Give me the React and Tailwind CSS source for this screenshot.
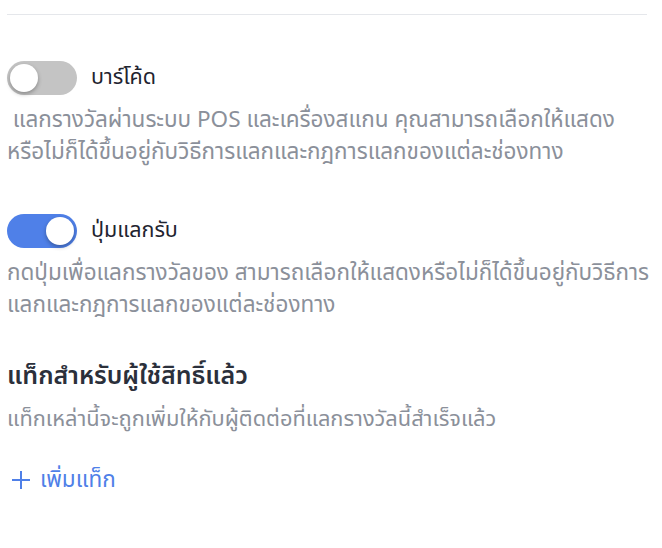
import { useState } from 'react';

const font = { fontFamily: '"Noto Sans Thai", "Noto Sans", "Liberation Sans", sans-serif' };

const Toggle = ({ on, onChange }) => (
  <button
    type="button"
    onClick={() => onChange(!on)}
    className={`relative h-[34px] w-[70px] shrink-0 rounded-full transition-colors ${on ? 'bg-[#4f80e8]' : 'bg-[#c4c4c4]'}`}
  >
    <span
      className={`absolute top-[3px] h-[28px] w-[28px] rounded-full bg-white shadow-[0_2px_4px_rgba(0,0,0,0.3)] transition-all ${on ? 'left-[39px]' : 'left-[3px]'}`}
    />
  </button>
);

const ToggleRow = ({ label, desc, on, onChange, descClass = '' }) => (
  <div>
    <div className="flex items-center gap-[14px]">
      <Toggle on={on} onChange={onChange} />
      <span className="text-[21.5px] leading-[32px] text-[#1f2430]">{label}</span>
    </div>
    <p className={`mt-[9px] text-[22.5px] leading-[32px] text-[#8b909a] ${descClass}`}>{desc}</p>
  </div>
);

export default function App() {
  const [barcode, setBarcode] = useState(false);
  const [button, setButton] = useState(true);

  return (
    <div className="min-h-screen bg-white pl-[7px] pr-[8px] pt-[14px]" style={font}>
      <div className="mr-[7px] border-t border-[#e5e7eb]" />

      <div className="mt-[46px]">
        <ToggleRow
          label="บาร์โค้ด"
          desc={'\u00a0แลกรางวัลผ่านระบบ POS และเครื่องสแกน คุณสามารถเลือกให้แสดงหรือไม่ก็ได้ขึ้นอยู่กับวิธีการแลกและกฎการแลกของแต่ละช่องทาง'}
          descClass="pr-[10px]"
          on={barcode}
          onChange={setBarcode}
        />
      </div>

      <div className="mt-[46px]">
        <ToggleRow
          label="ปุ่มแลกรับ"
          desc="กดปุ่มเพื่อแลกรางวัลของ สามารถเลือกให้แสดงหรือไม่ก็ได้ขึ้นอยู่กับวิธีการแลกและกฎการแลกของแต่ละช่องทาง"
          on={button}
          onChange={setButton}
        />
      </div>

      <div className="mt-[39px]">
        <h3 className="text-[25px] font-semibold leading-[32px] text-[#2b303b]">แท็กสำหรับผู้ใช้สิทธิ์แล้ว</h3>
        <p className="mt-[12px] text-[21.8px] leading-[32px] text-[#8b909a]">แท็กเหล่านี้จะถูกเพิ่มให้กับผู้ติดต่อที่แลกรางวัลนี้สำเร็จแล้ว</p>
        <button type="button" className="mt-[28px] flex items-center gap-[9px] pl-[4px] text-[22.5px] leading-[32px] text-[#4f80e8]">
          <svg width="20" height="20" viewBox="0 0 20 20" fill="none" stroke="currentColor" strokeWidth="2">
            <path d="M10 1v18M1 10h18" />
          </svg>
          เพิ่มแท็ก
        </button>
      </div>
    </div>
  );
}
